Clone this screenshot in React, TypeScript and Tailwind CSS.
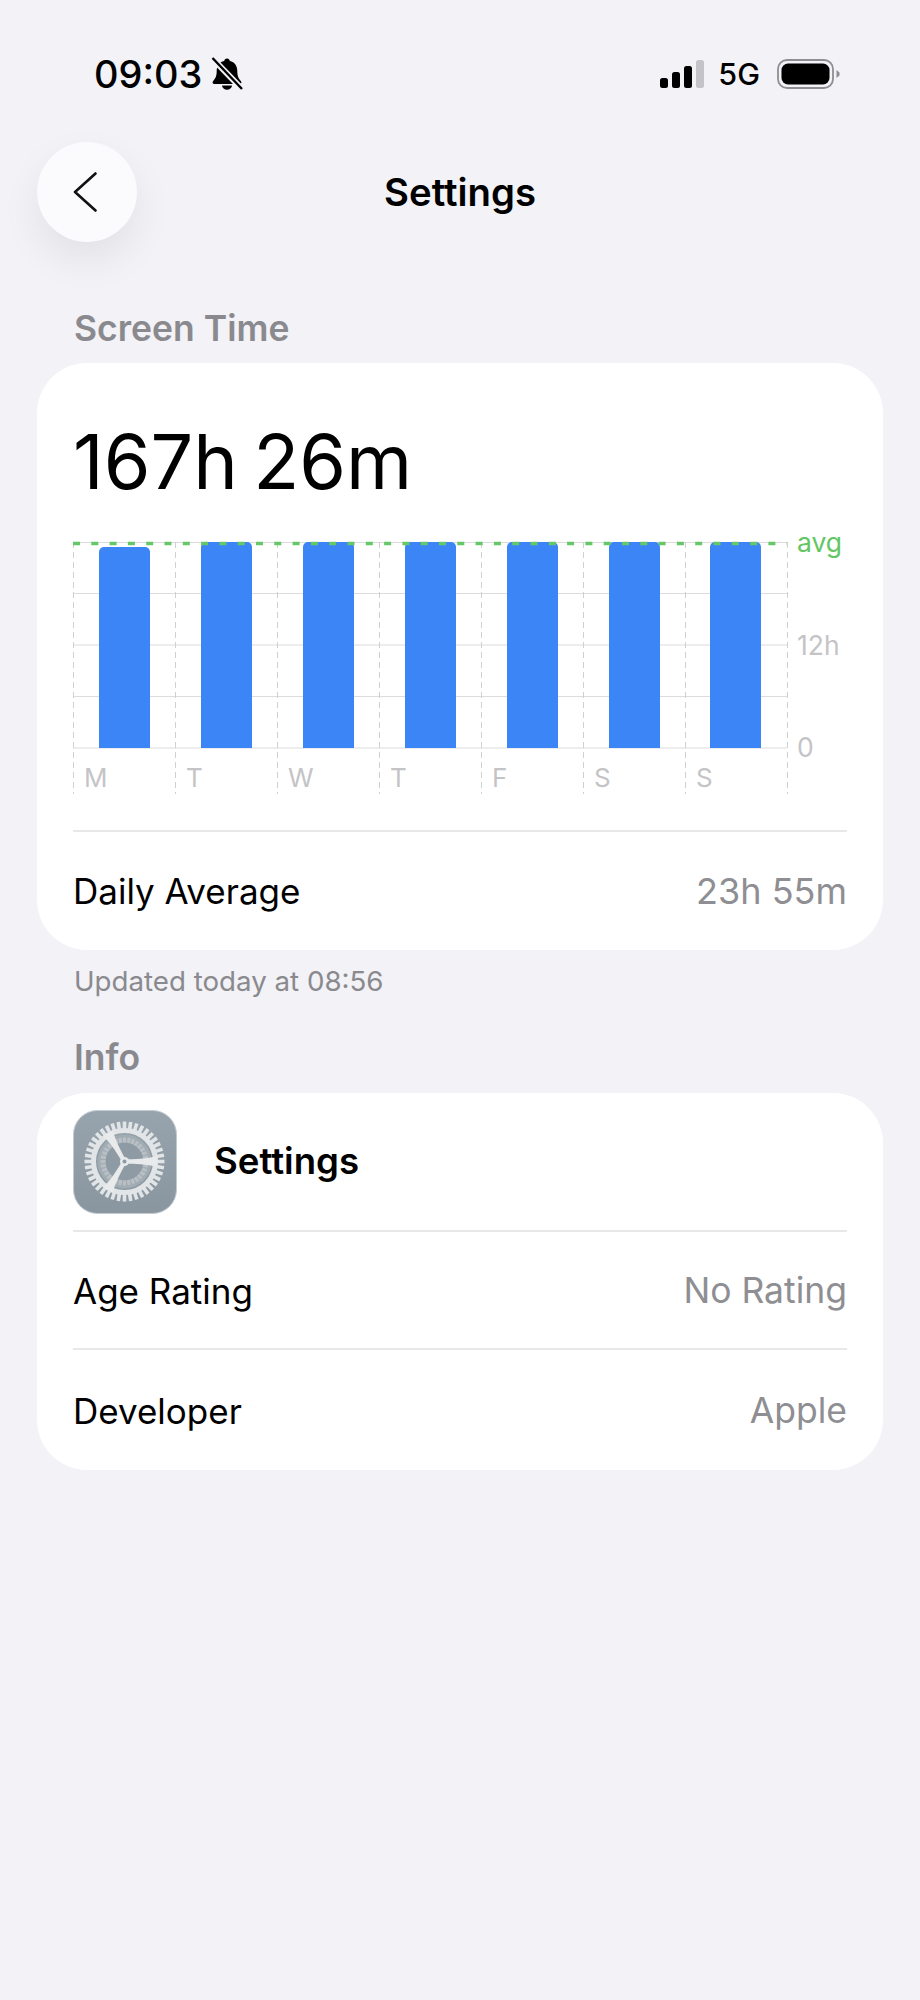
const F = "font-['Inter',sans-serif]";

function Bell() {
  return (
    <svg width="32" height="34" viewBox="0 0 32 34" className="ml-[9px]">
      <path d="M16 1.500c1.600 0 2.600 1 2.800 2.600 5 1.200 7.500 5 7.500 10 0 5.500 1.500 7.500 3.700 10.200 1 1.300.2 2.700-1.400 2.700H3.400c-1.600 0-2.400-1.400-1.400-2.700 2.200-2.700 3.700-4.700 3.700-10.200 0-5 2.500-8.800 7.500-10 .2-1.600 1.200-2.600 2.800-2.600z" fill="#000" />
      <path d="M11 28.500h10c-.3 2.600-2.300 4.300-5 4.300s-4.700-1.700-5-4.300z" fill="#000" />
      <path d="M1 1l30 31" stroke="#f2f2f7" strokeWidth="6" />
      <path d="M1.500 1l29.500 31" stroke="#000" strokeWidth="2.400" />
    </svg>
  );
}

function Signal() {
  return (
    <svg width="44" height="28" viewBox="0 0 44 28">
      <rect x="0" y="18" width="8" height="10" rx="2.500" fill="#000" />
      <rect x="12" y="12" width="8" height="16" rx="2.500" fill="#000" />
      <rect x="24" y="6" width="8" height="22" rx="2.500" fill="#000" />
      <rect x="36" y="0" width="8" height="28" rx="2.500" fill="#c3c3c8" />
    </svg>
  );
}

function Battery() {
  return (
    <svg width="63" height="30" viewBox="0 0 63 30">
      <rect x="1" y="1" width="55" height="28" rx="9" fill="none" stroke="#8e8e93" strokeWidth="1.800" />
      <rect x="4.500" y="4.500" width="48" height="21" rx="6.500" fill="#000" />
      <path d="M59.500 11l3 2.500v3l-3 2.500z" fill="#8e8e93" />
    </svg>
  );
}

function Chart() {
  const xs = [0, 102, 204, 306, 408, 510, 612, 714];
  const bars = [26, 128, 230, 332, 434, 536, 637];
  const days = ["M", "T", "W", "T", "F", "S", "S"];
  const ticks = [51.5, 103, 154.500, 206];
  return (
    <svg width="774" height="252" viewBox="0 0 774 252" className="block overflow-visible" fontFamily="Inter, sans-serif">
      <line x1="0" x2="714" y1="0.500" y2="0.500" stroke="#dcdcdc" strokeWidth="1" />
      {ticks.map((y) => (
        <line key={y} x1="0" x2="714" y1={y} y2={y} stroke="#dcdcdc" strokeWidth="1.200" />
      ))}
      {xs.map((x) => (
        <line key={x} x1={x + 0.500} x2={x + 0.500} y1="0" y2="252" stroke="#d0d0d0" strokeWidth="1" strokeDasharray="6 4" />
      ))}
      {bars.map((x, i) => (
        <path
          key={x}
          d={`M${x} 206V${i === 0 ? 10 : 5}a5 5 0 0 1 5-5h41a5 5 0 0 1 5 5V206z`}
          fill="#3b85f6"
        />
      ))}
      <line x1="0" x2="714" y1="1.500" y2="1.500" stroke="#66c768" strokeWidth="3.400" strokeDasharray="7 11.300" />
      {days.map((d, i) => (
        <text key={i} x={xs[i] + 11} y="245" fontSize="26" fill="#c4c4c6">
          {d}
        </text>
      ))}
      <text x="724" y="10" fontSize="26.500" fill="#62c763">avg</text>
      <text x="724" y="113" fontSize="26.500" fill="#c4c4c6">12h</text>
      <text x="724" y="215" fontSize="26.500" fill="#c4c4c6">0</text>
    </svg>
  );
}

function GearIcon() {
  const outer = Array.from({ length: 40 }, (_, i) => i * 9);
  const inner = Array.from({ length: 32 }, (_, i) => i * 11.25);
  const spoke = "M0 -2.200C10 -2.200 22 -2.500 33 -5.500L33 5.500C22 2.500 10 2.200 0 2.200Z";
  return (
    <svg width="104" height="104" viewBox="0 0 104 104" className="shrink-0">
      <defs>
        <linearGradient id="gbg" x1="0" y1="0" x2="0" y2="1">
          <stop offset="0" stopColor="#98a4ad" />
          <stop offset="1" stopColor="#89969f" />
        </linearGradient>
      </defs>
      <rect x="0.500" y="0.500" width="103" height="103" rx="24" fill="url(#gbg)" stroke="#c2cbd1" />
      <g transform="translate(51.500 51.500)">
        <circle r="27" fill="#a2acb3" />
        <circle r="19" fill="#8f9ba4" />
        {inner.map((a) => (
          <rect key={a} x="-1.500" y="-24" width="3" height="5" fill="#b9c0c5" transform={`rotate(${a})`} />
        ))}
        <circle r="31" fill="none" stroke="#e2e5e7" strokeWidth="5" />
        {outer.map((a) => (
          <rect key={a} x="-1.800" y="-40" width="3.600" height="8" fill="#e2e5e7" transform={`rotate(${a})`} />
        ))}
        {[0, 120, 240].map((a) => (
          <path key={a} d={spoke} fill="#e8eaec" transform={`rotate(${a})`} />
        ))}
        <circle r="4.500" fill="#e8eaec" />
        <circle r="2" fill="#8f9ba4" />
      </g>
    </svg>
  );
}

function Row({ label, value, h, valueSize }: { label: string; value: string; h: string; valueSize: string }) {
  return (
    <div className={`flex items-center justify-between ${h}`}>
      <span className="text-[35px] leading-none text-black">{label}</span>
      <span className={`${valueSize} leading-none text-[#8e8e93]`}>{value}</span>
    </div>
  );
}

export default function App() {
  return (
    <div className={`${F} w-[920px] h-[2000px] bg-[#f2f2f7] overflow-hidden`}>
      <div className="flex h-[142px] items-start justify-between pl-[94px] pr-[80px] pt-[55px]">
        <div className="flex h-[38px] items-center">
          <span className="text-[38px] font-medium leading-none text-black">09:03</span>
          <Bell />
        </div>
        <div className="flex h-[38px] items-center">
          <Signal />
          <span className="ml-[14px] mr-[17px] text-[30.500px] font-medium leading-none text-black">5G</span>
          <Battery />
        </div>
      </div>

      <div className="grid h-[100px] grid-cols-[100px_1fr_100px] items-center ml-[37px] mr-[37px]">
        <div className="flex h-[100px] w-[100px] items-center justify-center rounded-full bg-[#fbfbfe] shadow-[0_18px_40px_rgba(0,0,0,0.07)]">
          <svg width="24" height="40" viewBox="0 0 24 40" className="mr-[4px]">
            <path d="M22.500 1.500L2 20l20.500 18.500" fill="none" stroke="#111" strokeWidth="2.600" strokeLinecap="round" strokeLinejoin="round" />
          </svg>
        </div>
        <div className="text-center text-[38.300px] font-semibold leading-none text-black">Settings</div>
        <div />
      </div>

      <div className="ml-[37px] mr-[37px]">
        <div className="mt-[67px] pl-[37px] text-[35.500px] font-semibold leading-[40px] text-[#8a8a8e]">Screen Time</div>
        <div className="mt-[14px] rounded-[50px] bg-white px-[36px]">
          <div className="pt-[64px] text-[75.500px] leading-[70px] [word-spacing:-6px] text-black">167h 26m</div>
          <div className="mt-[45px]">
            <Chart />
          </div>
          <div className="mt-[36px] h-[2px] bg-[#e8e8ea]" />
          <Row label="Daily Average" value="23h 55m" h="h-[118px]" valueSize="text-[36px]" />
        </div>
        <div className="mt-[15px] pl-[37px] text-[27.700px] leading-[32px] text-[#8a8a8e]">Updated today at 08:56</div>

        <div className="mt-[41px] pl-[37px] text-[35.500px] font-semibold leading-[40px] text-[#8a8a8e]">Info</div>
        <div className="mt-[15px] rounded-[50px] bg-white px-[36px]">
          <div className="flex h-[139px] items-center border-b-2 border-[#e8e8ea]">
            <GearIcon />
            <span className="ml-[37px] text-[36.600px] font-semibold leading-none text-black">Settings</span>
          </div>
          <div className="border-b-2 border-[#e8e8ea]">
            <Row label="Age Rating" value="No Rating" h="h-[116px] pt-[2px]" valueSize="text-[35.500px]" />
          </div>
          <Row label="Developer" value="Apple" h="h-[120px] pt-[2px]" valueSize="text-[35.500px]" />
        </div>
      </div>
    </div>
  );
}
